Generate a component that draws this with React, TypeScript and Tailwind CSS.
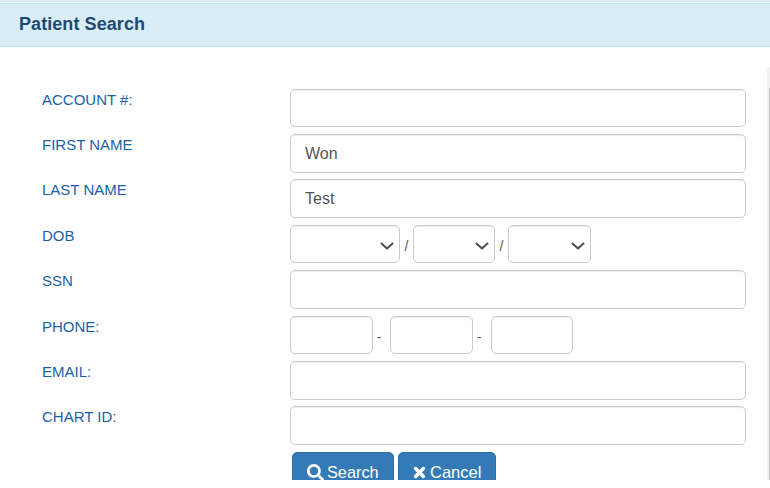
import { FaSearch } from 'react-icons/fa';

const inputClass =
  'block bg-white border border-[#cccccc] rounded-[5px] shadow-[inset_0_1px_1px_rgba(0,0,0,0.075)] px-[14px] text-[16px] text-[#555555] outline-none';

function Chevron() {
  return (
    <svg
      width="14"
      height="8"
      viewBox="0 0 14 8"
      fill="none"
      stroke="#4d4d4d"
      strokeWidth="2"
      strokeLinecap="round"
      strokeLinejoin="round"
      className="absolute right-[5px] top-[16px]"
    >
      <path d="M1.5 1.5 7 6.5l5.5-5" />
    </svg>
  );
}

function SelectBox({ width }: { width: string }) {
  return (
    <div className={`relative h-[38px] ${width} ${inputClass}`}>
      <Chevron />
    </div>
  );
}

function Row({ label, top, children }: { label: string; top: string; children: React.ReactNode }) {
  return (
    <div className={`flex ${top}`}>
      <label className="w-[248px] shrink-0 pt-px text-[15px] leading-5 text-[#1b5fa8]">{label}</label>
      {children}
    </div>
  );
}

function Sep({ children }: { children: string }) {
  return <span className="w-[13px] pt-[11px] text-center text-[14px] leading-5 text-[#555555]">{children}</span>;
}

export default function App() {
  return (
    <div className="relative h-[480px] w-[770px] overflow-hidden bg-white font-['Liberation_Sans',Arial,sans-serif]">
      <div className="h-[2px] bg-[#d9edf7]" />
      <div className="mt-px flex h-[44px] items-center border-y border-[#bce8f1] bg-[#d9edf7] pb-[2px] pl-[19px]">
        <h1 className="text-[18px] font-bold tracking-[0.07px] text-[#1d4a74]">Patient Search</h1>
      </div>

      <div className="absolute right-0 top-[67px] h-[413px] w-[3px] bg-[#f1f1f1]">
        <div className="ml-auto mt-[21px] h-[392px] w-px bg-[#c1c1c1]" />
      </div>

      <form className="flex flex-col pl-[42px] pt-[42px]">
        <Row label="ACCOUNT #:" top="">
          <input className={`h-[38px] w-[456px] ${inputClass}`} />
        </Row>
        <Row label="FIRST NAME" top="mt-[7px]">
          <input className={`h-[39px] w-[456px] ${inputClass}`} defaultValue="Won" />
        </Row>
        <Row label="LAST NAME" top="mt-[6px]">
          <input className={`h-[39px] w-[456px] ${inputClass}`} defaultValue="Test" />
        </Row>
        <Row label="DOB" top="mt-[7px]">
          <SelectBox width="w-[110px]" />
          <Sep>/</Sep>
          <SelectBox width="w-[82px]" />
          <Sep>/</Sep>
          <SelectBox width="w-[83px]" />
        </Row>
        <Row label="SSN" top="mt-[7px]">
          <input className={`h-[39px] w-[456px] ${inputClass}`} />
        </Row>
        <Row label="PHONE:" top="mt-[7px]">
          <input className={`h-[38px] w-[83px] ${inputClass}`} />
          <span className="w-[12px] pt-[11px] text-center text-[14px] leading-5 text-[#555555]">-</span>
          <span className="w-[5px]" />
          <input className={`h-[38px] w-[83px] ${inputClass}`} />
          <span className="w-[12px] pt-[11px] text-center text-[14px] leading-5 text-[#555555]">-</span>
          <span className="w-[6px]" />
          <input className={`h-[38px] w-[82px] ${inputClass}`} />
        </Row>
        <Row label="EMAIL:" top="mt-[7px]">
          <input className={`h-[39px] w-[456px] ${inputClass}`} />
        </Row>
        <Row label="CHART ID:" top="mt-[6px]">
          <input className={`h-[39px] w-[456px] ${inputClass}`} />
        </Row>
        <div className="ml-[250px] mt-[7px] flex gap-[4px]">
          <button
            type="button"
            className="flex h-[40px] w-[102px] items-center gap-[3px] rounded-[5px] border border-[#2e6da4] bg-[#337ab7] pl-[14px] text-[16.3px] text-white"
          >
            <FaSearch className="text-[17px]" />
            Search
          </button>
          <button
            type="button"
            className="flex h-[40px] w-[98px] items-center gap-[4px] rounded-[5px] border border-[#2e6da4] bg-[#337ab7] pl-[14px] text-[16.5px] text-white"
          >
            <svg width="13" height="13" viewBox="0 0 13 13" className="mt-px shrink-0">
              <path d="M2.6 2.6 10.4 10.4M10.4 2.6 2.6 10.4" stroke="white" strokeWidth="3.6" strokeLinecap="round" />
            </svg>
            Cancel
          </button>
        </div>
      </form>
    </div>
  );
}
